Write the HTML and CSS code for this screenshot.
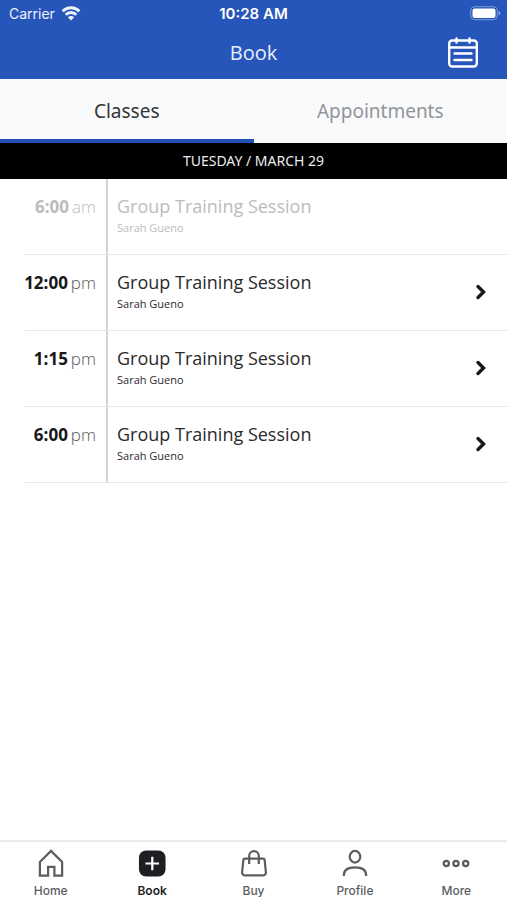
FILE: index.html
```html
<!DOCTYPE html>
<html lang="en">
<head>
<meta charset="utf-8">
<meta name="viewport" content="width=device-width, initial-scale=1">
<title>Book</title>
<link rel="stylesheet" href="styles.css">
</head>
<body>
<header class="header">
  <div class="status">
    <div class="carrier">
      <span>Carrier</span>
      <svg width="20" height="15" viewBox="0 0 20 15" fill="none" stroke="currentColor" stroke-width="3" aria-hidden="true">
        <path d="M1.600 5.300a12 12 0 0 1 16.800 0M4.700 8.800a7.500 7.500 0 0 1 10.600 0"/>
        <path d="M10 14.400 6.900 11.300a4.400 4.400 0 0 1 6.200 0z" fill="currentColor" stroke="none"/>
      </svg>
    </div>
    <time class="clock">10:28 AM</time>
    <svg class="battery" width="31" height="15" viewBox="0 0 31 15" aria-hidden="true">
      <rect x=".7" y=".7" width="26.6" height="13" rx="4" fill="none" stroke="#fff" stroke-opacity=".4"/>
      <rect x="2.5" y="2.5" width="23" height="9.4" rx="2.2" fill="#fff"/>
      <path d="M28.700 5v4.400q1.600-.6 1.600-2.200T28.700 5z" fill="#fff" fill-opacity=".5"/>
    </svg>
  </div>
  <div class="titlebar">
    <h1 class="title">Book</h1>
    <button class="calendar" type="button" aria-label="Calendar">
      <svg width="32" height="32" viewBox="0 0 32 32" fill="none" stroke="currentColor" stroke-width="2.4" stroke-linecap="round">
        <rect x="2.200" y="3.500" width="27.600" height="26" rx="3"/>
        <path d="M2.200 10.500h27.600M9.500 1.500v4M22.500 1.500v4M7.500 16.500h17M7.500 23h17"/>
      </svg>
    </button>
  </div>
</header>
<nav class="tabs" aria-label="Booking type">
  <button class="tab tab-active" type="button">Classes</button>
  <button class="tab" type="button">Appointments</button>
</nav>
<main class="main">
  <h2 class="date">TUESDAY / MARCH 29</h2>
  <ul class="sessions">
    <li class="session session-past">
      <div class="time"><b>6:00</b><span>am</span></div>
      <div class="info"><h3>Group Training Session</h3><p>Sarah Gueno</p></div>
    </li>
    <li class="session">
      <div class="time"><b>12:00</b><span>pm</span></div>
      <a class="info" href="#"><h3>Group Training Session</h3><p>Sarah Gueno</p>
        <svg class="chevron" width="12" height="18" viewBox="0 0 12 18"><path d="m3 3.500 5.500 5.500-5.500 5.500"/></svg></a>
    </li>
    <li class="session">
      <div class="time"><b>1:15</b><span>pm</span></div>
      <a class="info" href="#"><h3>Group Training Session</h3><p>Sarah Gueno</p>
        <svg class="chevron" width="12" height="18" viewBox="0 0 12 18"><path d="m3 3.500 5.500 5.500-5.500 5.500"/></svg></a>
    </li>
    <li class="session">
      <div class="time"><b>6:00</b><span>pm</span></div>
      <a class="info" href="#"><h3>Group Training Session</h3><p>Sarah Gueno</p>
        <svg class="chevron" width="12" height="18" viewBox="0 0 12 18"><path d="m3 3.500 5.500 5.500-5.500 5.500"/></svg></a>
    </li>
  </ul>
</main>
<nav class="bottom" aria-label="Main">
  <a class="item" href="#">
    <svg viewBox="0 0 30 30"><path d="M3.500 13.500 15 2l11.500 11.500V27.500h-8V18.500h-6.500v9h-8.500z"/></svg>
    <span>Home</span>
  </a>
  <a class="item item-active" href="#" aria-current="page">
    <svg viewBox="0 0 30 30"><rect x="1.500" y="1.500" width="27.500" height="27" rx="7.500" fill="currentColor" stroke="none"/><path d="M15.300 8v14M8.300 15h14" stroke="#fff"/></svg>
    <span>Book</span>
  </a>
  <a class="item" href="#">
    <svg viewBox="0 0 30 30"><path d="M5.500 10h19a1.500 1.500 0 0 1 1.500 1.300l1.300 12.700a3 3 0 0 1-3 3.300H5.700a3 3 0 0 1-3-3.300L4 11.300A1.500 1.500 0 0 1 5.500 10zM10 15.500V7.200a5 5 0 0 1 10 0v8.300"/></svg>
    <span>Buy</span>
  </a>
  <a class="item" href="#">
    <svg viewBox="0 0 30 30"><ellipse cx="15" cy="8" rx="5.500" ry="6"/><path d="M3.500 28v-1c0-5 4-8 11.500-8s11.500 3 11.500 8v1"/></svg>
    <span>Profile</span>
  </a>
  <a class="item" href="#">
    <svg viewBox="0 0 30 30"><circle cx="5" cy="15" r="2.700"/><circle cx="15" cy="15" r="2.700"/><circle cx="25" cy="15" r="2.700"/></svg>
    <span>More</span>
  </a>
</nav>
</body>
</html>
```
FILE: styles.css
```css
* {
  box-sizing: border-box;
}

body {
  margin: 0;
  min-height: 100vh;
  display: flex;
  flex-direction: column;
  background: #fff;
  color: #2a2a2c;
  font-family: "Open Sans", "Noto Sans", sans-serif;
}

h1, h2, h3, p, ul {
  margin: 0;
  padding: 0;
  font-weight: 400;
}

button {
  border: 0;
  padding: 0;
  background: none;
  color: inherit;
  font: inherit;
}

a {
  color: inherit;
  text-decoration: none;
}

svg {
  display: block;
}

.header {
  background: #2756bb;
  color: #fff;
}

.status {
  display: grid;
  grid-template-columns: 1fr auto 1fr;
  align-items: center;
  height: 27px;
  padding: 0 6px;
  font: 14px/27px Inter, sans-serif;
}

.carrier {
  display: flex;
  align-items: center;
  gap: 6px;
  padding-left: 3px;
  color: #eef2fb;
}

.clock {
  font-size: 15px;
  font-weight: 600;
}

.battery {
  justify-self: end;
}

.titlebar {
  display: grid;
  grid-template-columns: 1fr auto 1fr;
  align-items: center;
  height: 52px;
  padding: 0 28px;
}

.title {
  grid-column: 2;
  font-size: 20px;
  line-height: 52px;
  color: #e9effb;
}

.calendar {
  justify-self: end;
}

.tabs {
  display: flex;
  height: 64px;
  background: #f9fafc;
}

.tab {
  flex: 1;
  padding-top: 4px;
  border-bottom: 4px solid transparent;
  font-family: "Noto Sans", sans-serif;
  font-size: 19px;
  color: #939498;
}

.tab-active {
  border-color: #2351b3;
  color: #353538;
}

.main {
  flex: 1;
}

.date {
  background: #000;
  color: #ececec;
  font-family: "Noto Sans", sans-serif;
  font-size: 14px;
  line-height: 36px;
  text-align: center;
}

.sessions {
  list-style: none;
}

.session {
  display: flex;
  height: 76px;
  margin-left: 25px;
  border-bottom: 1px solid #e6e6e6;
}

.time {
  display: flex;
  justify-content: flex-end;
  gap: 3px;
  width: 83px;
  padding: 14px 10px 0 0;
  border-right: 2px solid #d4d4d4;
  font-size: 17px;
  line-height: 28px;
}

.time b {
  font-weight: 700;
  color: #18181a;
}

.time span {
  font-weight: 300;
  color: #555;
}

.info {
  position: relative;
  flex: 1;
  padding: 13px 0 0 9px;
}

.info h3 {
  font-size: 18px;
  line-height: 28px;
}

.info p {
  font-size: 11px;
  line-height: 16px;
}

.chevron {
  position: absolute;
  top: 28px;
  right: 20px;
  fill: none;
  stroke: #18181a;
  stroke-width: 3.4;
  stroke-linecap: round;
}

.session-past .info,
.session-past .time b,
.session-past .time span {
  color: #bcbcbc;
}

.bottom {
  display: flex;
  height: 60px;
  border-top: 2px solid #ebebeb;
}

.item {
  flex: 1;
  display: flex;
  flex-direction: column;
  align-items: center;
  gap: 4px;
  padding-top: 7px;
  color: #5b5e61;
  font: 500 12px/18px Inter, sans-serif;
}

.item svg {
  width: 30px;
  height: 30px;
  fill: none;
  stroke: currentColor;
  stroke-width: 2.3;
}

.item-active {
  color: #1d1f22;
  font-weight: 600;
}
```
